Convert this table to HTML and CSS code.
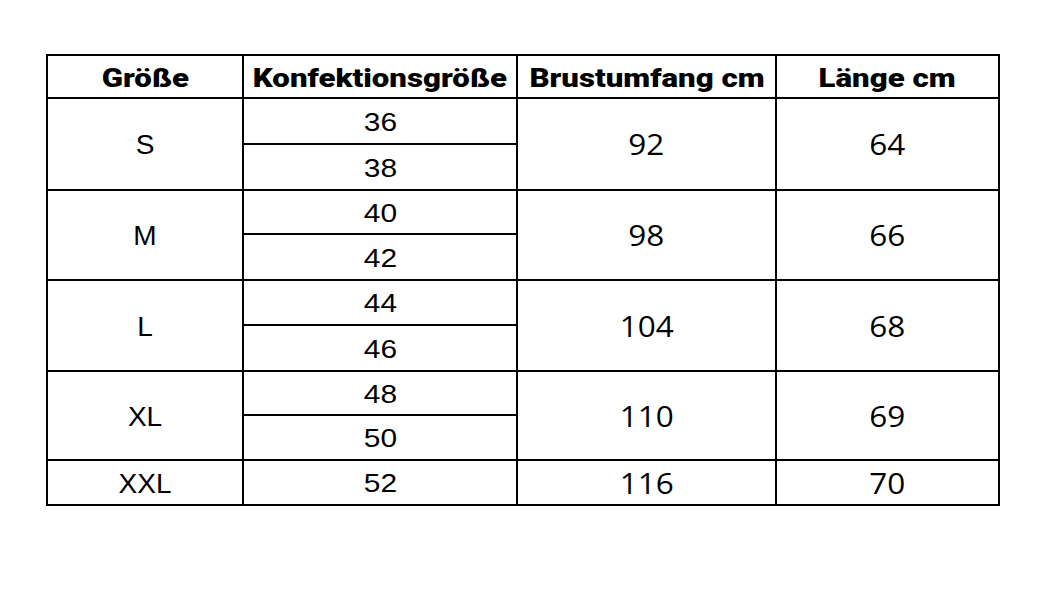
FILE: index.html
```html
<!DOCTYPE html>
<html lang="de">
<head>
<meta charset="utf-8">
<title>Größentabelle</title>
<link rel="stylesheet" href="styles.css">
</head>
<body>
<div class="size-table">
  <div class="cell head"><span class="t">Größe</span></div>
  <div class="cell head"><span class="t">Konfektionsgröße</span></div>
  <div class="cell head"><span class="t">Brustumfang cm</span></div>
  <div class="cell head"><span class="t">Länge cm</span></div>

  <div class="cell size r2-3"><span class="t">S</span></div>
  <div class="cell konf r2"><span class="t">36</span></div>
  <div class="cell num r2-3"><span class="t">92</span></div>
  <div class="cell num r2-3"><span class="t">64</span></div>
  <div class="cell konf r3"><span class="t">38</span></div>

  <div class="cell size r4-5"><span class="t">M</span></div>
  <div class="cell konf r4"><span class="t">40</span></div>
  <div class="cell num r4-5"><span class="t">98</span></div>
  <div class="cell num r4-5"><span class="t">66</span></div>
  <div class="cell konf r5"><span class="t">42</span></div>

  <div class="cell size r6-7"><span class="t">L</span></div>
  <div class="cell konf r6"><span class="t">44</span></div>
  <div class="cell num r6-7"><span class="t">104</span></div>
  <div class="cell num r6-7"><span class="t">68</span></div>
  <div class="cell konf r7"><span class="t">46</span></div>

  <div class="cell size r8-9"><span class="t">XL</span></div>
  <div class="cell konf r8"><span class="t">48</span></div>
  <div class="cell num r8-9"><span class="t">110</span></div>
  <div class="cell num r8-9"><span class="t">69</span></div>
  <div class="cell konf r9"><span class="t">50</span></div>

  <div class="cell size r10"><span class="t">XXL</span></div>
  <div class="cell konf r10"><span class="t">52</span></div>
  <div class="cell num r10"><span class="t">116</span></div>
  <div class="cell num r10"><span class="t">70</span></div>
</div>
</body>
</html>
```
FILE: styles.css
```css
html, body {
  margin: 0;
  padding: 0;
  background: #ffffff;
}

body {
  padding: 54px 0 0 46px;
  color: #000;
}

.size-table {
  display: grid;
  grid-template-columns: 196px 274px 259px 223px;
  grid-template-rows: 43px 46px 46px 44px 46px 45px 46px 44px 45px 45px;
  width: max-content;
  border-left: 2px solid #000;
  border-top: 2px solid #000;
}

.cell {
  display: flex;
  align-items: center;
  justify-content: center;
  border-right: 2px solid #000;
  border-bottom: 2px solid #000;
  white-space: nowrap;
}

.t {
  display: inline-block;
  line-height: 1;
}

.head {
  font-family: Roboto, "Liberation Sans", sans-serif;
  font-weight: 900;
  font-size: 26px;
  padding-top: 3px;
}
.head .t {
  transform: scaleX(1.2);
}

.size {
  grid-column: 1;
  font-family: "Liberation Sans", Arial, sans-serif;
  font-size: 28px;
  padding-top: 2px;
}

.konf {
  grid-column: 2;
  font-family: "Liberation Sans", Arial, sans-serif;
  font-size: 26px;
  padding-top: 1px;
}
.konf .t {
  transform: scaleX(1.15);
}

.num {
  font-family: "Open Sans", "Liberation Sans", sans-serif;
  font-size: 30px;
}
.num .t {
  transform: scaleX(1.05);
}

.r2-3 { grid-row: 2 / 4; }
.r4-5 { grid-row: 4 / 6; }
.r6-7 { grid-row: 6 / 8; }
.r8-9 { grid-row: 8 / 10; }
.r2 { grid-row: 2; }
.r3 { grid-row: 3; }
.r4 { grid-row: 4; }
.r5 { grid-row: 5; }
.r6 { grid-row: 6; }
.r7 { grid-row: 7; }
.r8 { grid-row: 8; }
.r9 { grid-row: 9; }
.r10 { grid-row: 10; }
```
